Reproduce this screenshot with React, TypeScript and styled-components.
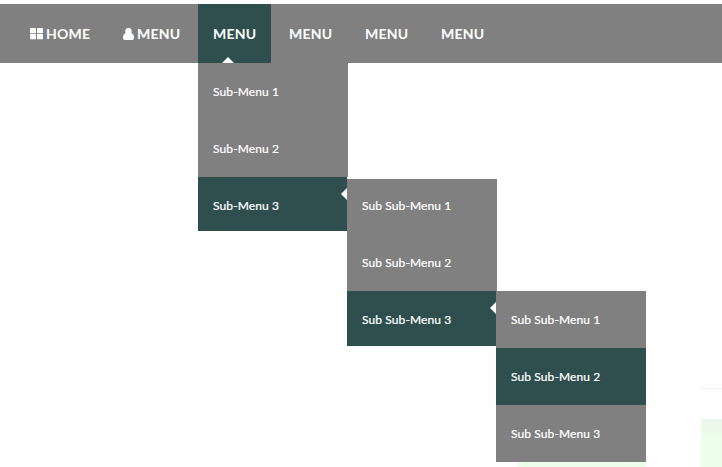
import React from "react";
import styled, { createGlobalStyle, css } from "styled-components";

const GREY = "#808080";
const SLATE = "#2f4f4f";

const GlobalStyle = createGlobalStyle`
  body {
    margin: 0;
    background: #fefefe;
    font-family: Lato, "Liberation Sans", sans-serif;
    color: #fff;
  }
`;

const Page = styled.div`
  display: flex;
  flex-direction: column;
  height: 467px;
  padding-top: 4px;
  box-sizing: border-box;
  overflow: hidden;
`;

const NavBar = styled.ul`
  display: flex;
  flex: none;
  gap: 3px;
  height: 59px;
  margin: 0;
  padding: 0 15px;
  list-style: none;
  background: ${GREY};
`;

const NavItem = styled.li<{ $active?: boolean }>`
  position: relative;
  display: flex;
  align-items: center;
  gap: 3px;
  box-sizing: border-box;
  min-width: 73px;
  padding: 1px 14px 0 15px;
  font-size: 14px;
  font-weight: 700;
  line-height: 20px;
  letter-spacing: 0.2px;
  white-space: nowrap;
  background: ${(p) => (p.$active ? SLATE : "transparent")};
`;

const NavLabel = styled.span<{ $width: number }>`
  width: ${(p) => p.$width}px;
`;

const NavIcon = styled.svg`
  flex: none;
  fill: #fff;
`;

const UpArrow = styled.span`
  position: absolute;
  left: 24px;
  bottom: 0;
  border: 6px solid transparent;
  border-top: 0;
  border-bottom-color: #fff;
`;

const LeftArrow = styled.span`
  position: absolute;
  top: 11px;
  right: 0;
  border: 6px solid transparent;
  border-left: 0;
  border-right-color: #fff;
`;

const subMenuBase = css`
  position: absolute;
  z-index: 1;
  display: flex;
  flex-direction: column;
  width: 150px;
  margin: 0;
  padding: 0;
  list-style: none;
`;

const DropMenu = styled.ul`
  ${subMenuBase}
  top: 100%;
  left: 0;
`;

const FlyoutMenu = styled.ul<{ $lowered?: boolean }>`
  ${subMenuBase}
  top: 0;
  left: 100%;
  ${(p) =>
    p.$lowered &&
    css`
      margin-top: 2px;
      > li:first-child {
        height: 55px;
      }
    `}
`;

const SubItem = styled.li<{ $active?: boolean; $open?: number }>`
  position: relative;
  box-sizing: border-box;
  display: flex;
  align-items: flex-end;
  height: 57px;
  padding: 0 15px 18px;
  font-size: 12px;
  font-weight: 400;
  line-height: 20px;
  letter-spacing: 0.11px;
  -webkit-text-stroke: 0.2px #fff;
  background: ${(p) => (p.$active ? SLATE : GREY)};
  ${(p) =>
    p.$open &&
    css`
      width: 149px;
      height: ${p.$open}px;
      padding-bottom: ${p.$open - 39}px;
    `}
`;

const Content = styled.main`
  display: grid;
  flex: 1;
  grid-template-columns: 128px 21px;
  column-gap: 55px;
  justify-content: end;
`;

const LowerCard = styled.div`
  align-self: end;
  height: 5px;
  background: #edfeea;
`;

const SideColumn = styled.div`
  display: flex;
  flex-direction: column;
  justify-content: flex-end;
  gap: 30px;
`;

const CardRule = styled.div`
  height: 1px;
  background: #f2f2f2;
`;

const SideCard = styled.div`
  height: 48px;
  background: linear-gradient(#eaf6ea, #edfeea 20px);
`;

export default function App() {
  return (
    <Page>
      <GlobalStyle />
      <NavBar>
        <NavItem>
          <NavIcon width="13" height="12" viewBox="0 0 13 12">
            <rect width="6" height="5.3" rx=".5" />
            <rect x="7" width="6" height="5.3" rx=".5" />
            <rect y="6" width="6" height="5.3" rx=".5" />
            <rect x="7" y="6" width="6" height="5.3" rx=".5" />
          </NavIcon>
          <NavLabel $width={45}>HOME</NavLabel>
        </NavItem>
        <NavItem>
          <NavIcon width="11" height="12" viewBox="0 0 11 12">
            <circle cx="5.5" cy="3.2" r="3.2" />
            <path d="M2.6 5.2H8.4C10.2 5.6 11 7.6 11 9.8 11 11.2 10.1 12 9 12H2C.9 12 0 11.2 0 9.8 0 7.6.8 5.6 2.6 5.2Z" />
          </NavIcon>
          <NavLabel $width={44}>MENU</NavLabel>
        </NavItem>
        <NavItem $active>
          MENU
          <UpArrow />
          <DropMenu>
            <SubItem>Sub-Menu 1</SubItem>
            <SubItem>Sub-Menu 2</SubItem>
            <SubItem $active $open={54}>
              Sub-Menu 3
              <LeftArrow />
              <FlyoutMenu $lowered>
                <SubItem>Sub Sub-Menu 1</SubItem>
                <SubItem>Sub Sub-Menu 2</SubItem>
                <SubItem $active $open={55}>
                  Sub Sub-Menu 3
                  <LeftArrow />
                  <FlyoutMenu>
                    <SubItem>Sub Sub-Menu 1</SubItem>
                    <SubItem $active>Sub Sub-Menu 2</SubItem>
                    <SubItem>Sub Sub-Menu 3</SubItem>
                  </FlyoutMenu>
                </SubItem>
              </FlyoutMenu>
            </SubItem>
          </DropMenu>
        </NavItem>
        <NavItem>MENU</NavItem>
        <NavItem>MENU</NavItem>
        <NavItem>MENU</NavItem>
      </NavBar>
      <Content>
        <LowerCard />
        <SideColumn>
          <CardRule />
          <SideCard />
        </SideColumn>
      </Content>
    </Page>
  );
}
